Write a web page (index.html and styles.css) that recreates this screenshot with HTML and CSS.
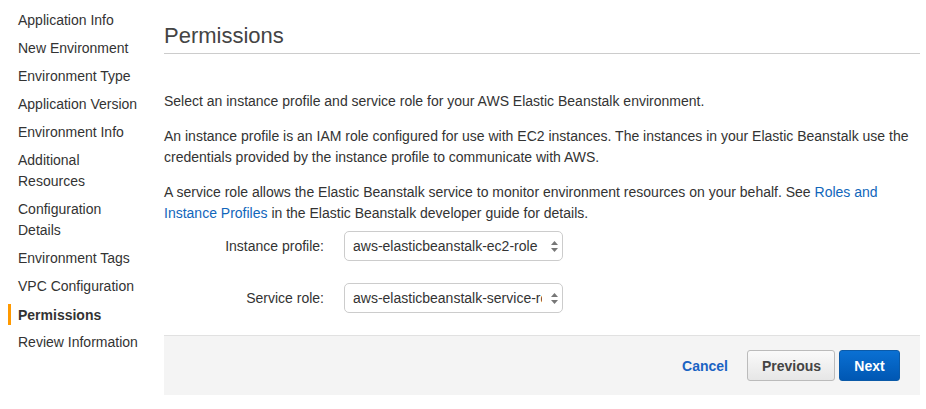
FILE: index.html
```html
<!DOCTYPE html>
<html>
<head>
<meta charset="utf-8">
<link rel="stylesheet" href="styles.css">
</head>
<body>
<div class="page">
  <nav class="sidebar">
    <a class="nav-item">Application Info</a>
    <a class="nav-item">New Environment</a>
    <a class="nav-item">Environment Type</a>
    <a class="nav-item">Application Version</a>
    <a class="nav-item">Environment Info</a>
    <a class="nav-item">Additional<br>Resources</a>
    <a class="nav-item">Configuration<br>Details</a>
    <a class="nav-item">Environment Tags</a>
    <a class="nav-item">VPC Configuration</a>
    <a class="nav-item active">Permissions</a>
    <a class="nav-item">Review Information</a>
  </nav>
  <main class="main">
    <h1 class="title">Permissions</h1>
    <div class="content">
      <p>Select an instance profile and service role for your AWS Elastic Beanstalk environment.</p>
      <p>An instance profile is an IAM role configured for use with EC2 instances. The instances in your Elastic Beanstalk use the credentials provided by the instance profile to communicate with AWS.</p>
      <p class="last">A service role allows the Elastic Beanstalk service to monitor environment resources on your behalf. See <a class="link">Roles and Instance Profiles</a> in the Elastic Beanstalk developer guide for details.</p>
      <div class="form">
        <div class="row">
          <label class="label">Instance profile:</label>
          <div class="select-wrap">
            <select class="select"><option>aws-elasticbeanstalk-ec2-role</option></select>
            <svg class="arrows" width="7" height="11" viewBox="0 0 7 11"><path d="M3.5 0 L7 4 L0 4 Z M0 7 L7 7 L3.5 11 Z" fill="#777"/></svg>
          </div>
        </div>
        <div class="row">
          <label class="label">Service role:</label>
          <div class="select-wrap">
            <select class="select"><option>aws-elasticbeanstalk-service-role</option></select>
            <svg class="arrows" width="7" height="11" viewBox="0 0 7 11"><path d="M3.5 0 L7 4 L0 4 Z M0 7 L7 7 L3.5 11 Z" fill="#777"/></svg>
          </div>
        </div>
      </div>
    </div>
    <div class="footer">
      <a class="cancel">Cancel</a>
      <button class="btn btn-prev">Previous</button>
      <button class="btn btn-next">Next</button>
    </div>
  </main>
</div>
</body>
</html>
```

FILE: styles.css
```css
* { box-sizing: border-box; }
html, body { margin: 0; padding: 0; background: #fff; }
body {
  font-family: "Liberation Sans", Arial, Helvetica, sans-serif;
  font-size: 14px;
  color: #333;
}
.page {
  display: flex;
  width: 926px;
  height: 409px;
}
.sidebar {
  width: 164px;
  flex: none;
  padding: 10px 0 0 18px;
  display: flex;
  flex-direction: column;
  gap: 7px;
}
.nav-item {
  position: relative;
  display: block;
  line-height: 21px;
  color: #333;
}
.nav-item.active {
  font-weight: bold;
  margin-top: 1px;
  margin-bottom: -1px;
}
.nav-item.active::before {
  content: "";
  position: absolute;
  left: -10px;
  top: -1px;
  width: 3px;
  height: 21px;
  background: #f90;
}
.main {
  width: 756px;
  flex: none;
  display: flex;
  flex-direction: column;
}
.title {
  margin: 22px 0 0;
  font-size: 22px;
  font-weight: normal;
  line-height: 28px;
  color: #444;
  padding-bottom: 3px;
  border-bottom: 1px solid #ccc;
}
.content {
  padding-top: 37px;
}
.content p {
  margin: 0 0 14px;
  line-height: 21px;
}
.content p.last { margin-bottom: 0; }
.link { color: #1166bb; }
.form {
  padding-top: 7px;
  display: flex;
  flex-direction: column;
  gap: 22px;
}
.row {
  display: flex;
  align-items: center;
  gap: 20px;
}
.label {
  width: 160px;
  text-align: right;
  color: #333;
}
.select-wrap {
  position: relative;
  width: 219px;
  height: 30px;
}
.select {
  -webkit-appearance: none;
  appearance: none;
  width: 100%;
  height: 30px;
  border: 1px solid #ccc;
  border-radius: 5px;
  background: #fff;
  font-family: inherit;
  font-size: 14px;
  color: #333;
  padding: 0 20px 0 8px;
}
.arrows {
  position: absolute;
  right: 5px;
  top: 10px;
  pointer-events: none;
}
.footer {
  margin-top: 22px;
  height: 60px;
  background: #f4f4f4;
  border-top: 1px solid #e1e1e1;
  display: flex;
  align-items: center;
  justify-content: flex-end;
  padding-right: 20px;
}
.cancel {
  color: #1a63c3;
  font-weight: bold;
  margin-right: 19px;
}
.btn {
  height: 31px;
  font-family: inherit;
  font-size: 14px;
  font-weight: bold;
  border-radius: 3px;
  padding: 0 14px;
}
.btn-prev {
  width: 88px;
  color: #444;
  background: linear-gradient(#fafafa, #e6e6e6);
  border: 1px solid #bbb;
  margin-right: 4px;
}
.btn-next {
  width: 61px;
  color: #fff;
  background: linear-gradient(#0a70d3, #0057b3);
  border: 1px solid #0b5aa8;
}
```
